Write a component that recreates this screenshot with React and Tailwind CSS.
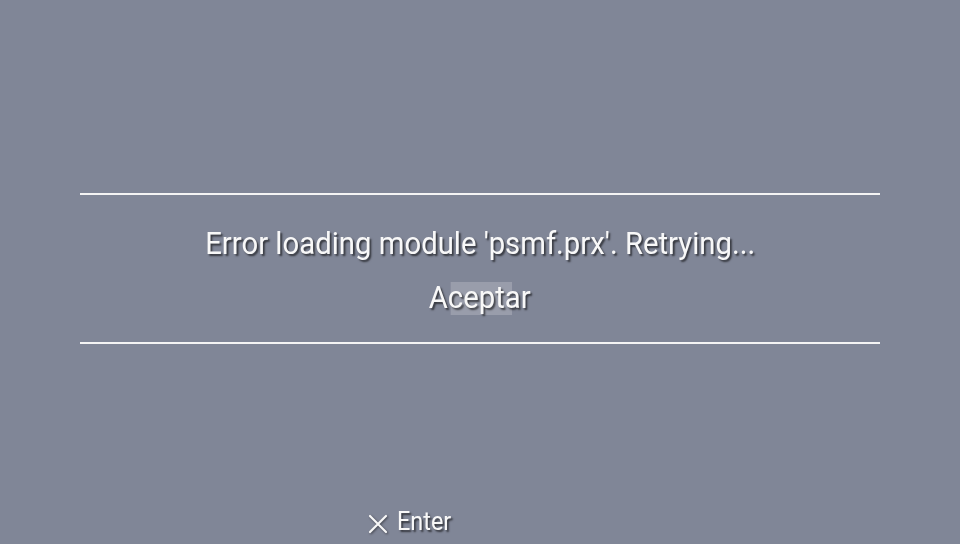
export default function App() {
  const shadow = { textShadow: "2px 2px 2px rgba(0,0,0,0.6)" };
  return (
    <div className="w-[960px] h-[544px] bg-[#808697] flex flex-col items-center overflow-hidden" style={{ fontFamily: "Roboto, 'Liberation Sans', sans-serif" }}>
      <div className="h-[193px]" />
      <div className="w-[800px] h-[2px] bg-[#f4f4f4]" />
      <div className="h-[147px] flex flex-col items-center justify-center text-[#f8f8f8]">
        <div className="text-[32px] leading-[36px] scale-x-[0.916] whitespace-nowrap mt-[2px]" style={shadow}>
          Error loading module 'psmf.prx'. Retrying...
        </div>
        <div className="relative mt-[18px] text-[32px] leading-[36px] scale-x-[0.916] whitespace-nowrap" style={shadow}>
          <span className="absolute left-[24px] top-[3px] w-[67px] h-[33px] bg-[#999dab]" />
          <span className="relative">Aceptar</span>
        </div>
      </div>
      <div className="w-[800px] h-[2px] bg-[#f4f4f4]" />
      <div className="flex-1" />
      <div className="w-full flex items-center gap-[9px] mb-[8px] pl-[368px] text-[#f8f8f8]">
        <svg width="20" height="20" viewBox="0 0 20 20" className="mt-[6px]" style={{ filter: "drop-shadow(1px 1px 1px rgba(0,0,0,0.5))" }}>
          <path d="M2 2 L18 18 M18 2 L2 18" stroke="#f8f8f8" strokeWidth="2.2" strokeLinecap="round" />
        </svg>
        <span className="text-[26px] leading-[30px] scale-x-[0.9] origin-left" style={shadow}>Enter</span>
      </div>
    </div>
  );
}
